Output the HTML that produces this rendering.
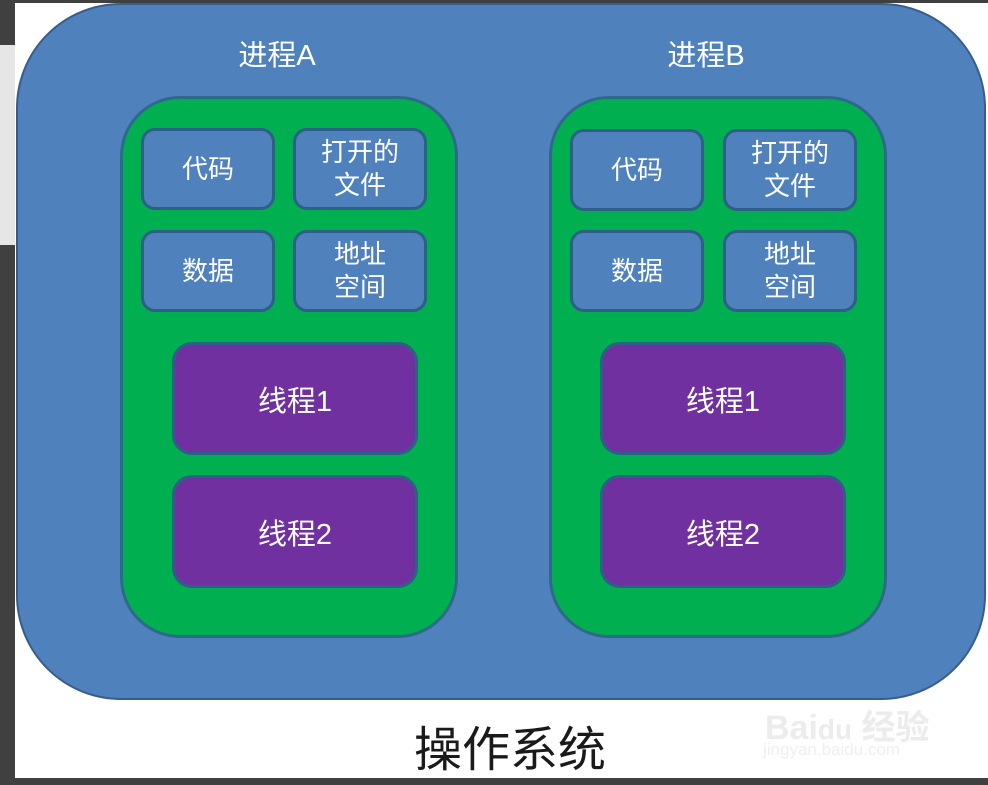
<!DOCTYPE html>
<html><head><meta charset="utf-8"><style>
body{margin:0;width:988px;height:785px;background:#404040;position:relative;overflow:hidden;font-family:"Liberation Sans","Noto Sans CJK SC",sans-serif}
div{position:absolute;box-sizing:border-box}
.w{left:15px;top:3px;width:973px;height:775px;background:#fff}
.strip{left:0;top:45px;width:15px;height:200px;background:#e6e6e6}
.os{left:16px;top:3px;width:970px;height:697px;background:#4f81bd;border:2px solid #385d8a;border-radius:105px}
.g{top:96px;width:338px;height:542px;background:#00b050;border:3px solid #2d6a8a;border-radius:60px}
.s{width:134px;height:82px;background:#4f81bd;border:3px solid #2e5f86;border-radius:14px;color:#fff;font-size:26px;line-height:33px;display:flex;align-items:center;justify-content:center;text-align:center}
.p{width:246px;height:113px;background:#7030a0;border:3px solid #2e5f86;border-radius:20px;color:#fff;font-size:29px;display:flex;align-items:center;justify-content:center}
.t{color:#fff;font-size:29px;top:32px;width:200px;text-align:center}
</style></head><body>
<div class="w"></div>
<div class="strip"></div>
<div class="os"></div>
<div class="t" style="left:177px">进程A</div>
<div class="t" style="left:606px">进程B</div>
<div class="g" style="left:120px"></div>
<div class="g" style="left:549px"></div>
<div class="s" style="left:141px;top:128px">代码</div>
<div class="s" style="left:293px;top:128px">打开的<br>文件</div>
<div class="s" style="left:141px;top:230px">数据</div>
<div class="s" style="left:293px;top:230px">地址<br>空间</div>
<div class="p" style="left:172px;top:342px">线程1</div>
<div class="p" style="left:172px;top:475px">线程2</div>
<div class="s" style="left:570px;top:129px">代码</div>
<div class="s" style="left:723px;top:129px">打开的<br>文件</div>
<div class="s" style="left:570px;top:230px">数据</div>
<div class="s" style="left:723px;top:230px">地址<br>空间</div>
<div class="p" style="left:600px;top:342px">线程1</div>
<div class="p" style="left:600px;top:475px">线程2</div>
<div style="left:310px;top:710px;width:400px;text-align:center;font-size:48px;color:#1a1a1a">操作系统</div>
<div style="left:765px;top:700px;font-size:34px;font-weight:bold;color:#ececec">Bai<span style="font-size:28px">du</span> 经验</div>
<div style="left:763px;top:740px;font-size:17px;color:#efefef">jingyan.baidu.com</div>
</body></html>
